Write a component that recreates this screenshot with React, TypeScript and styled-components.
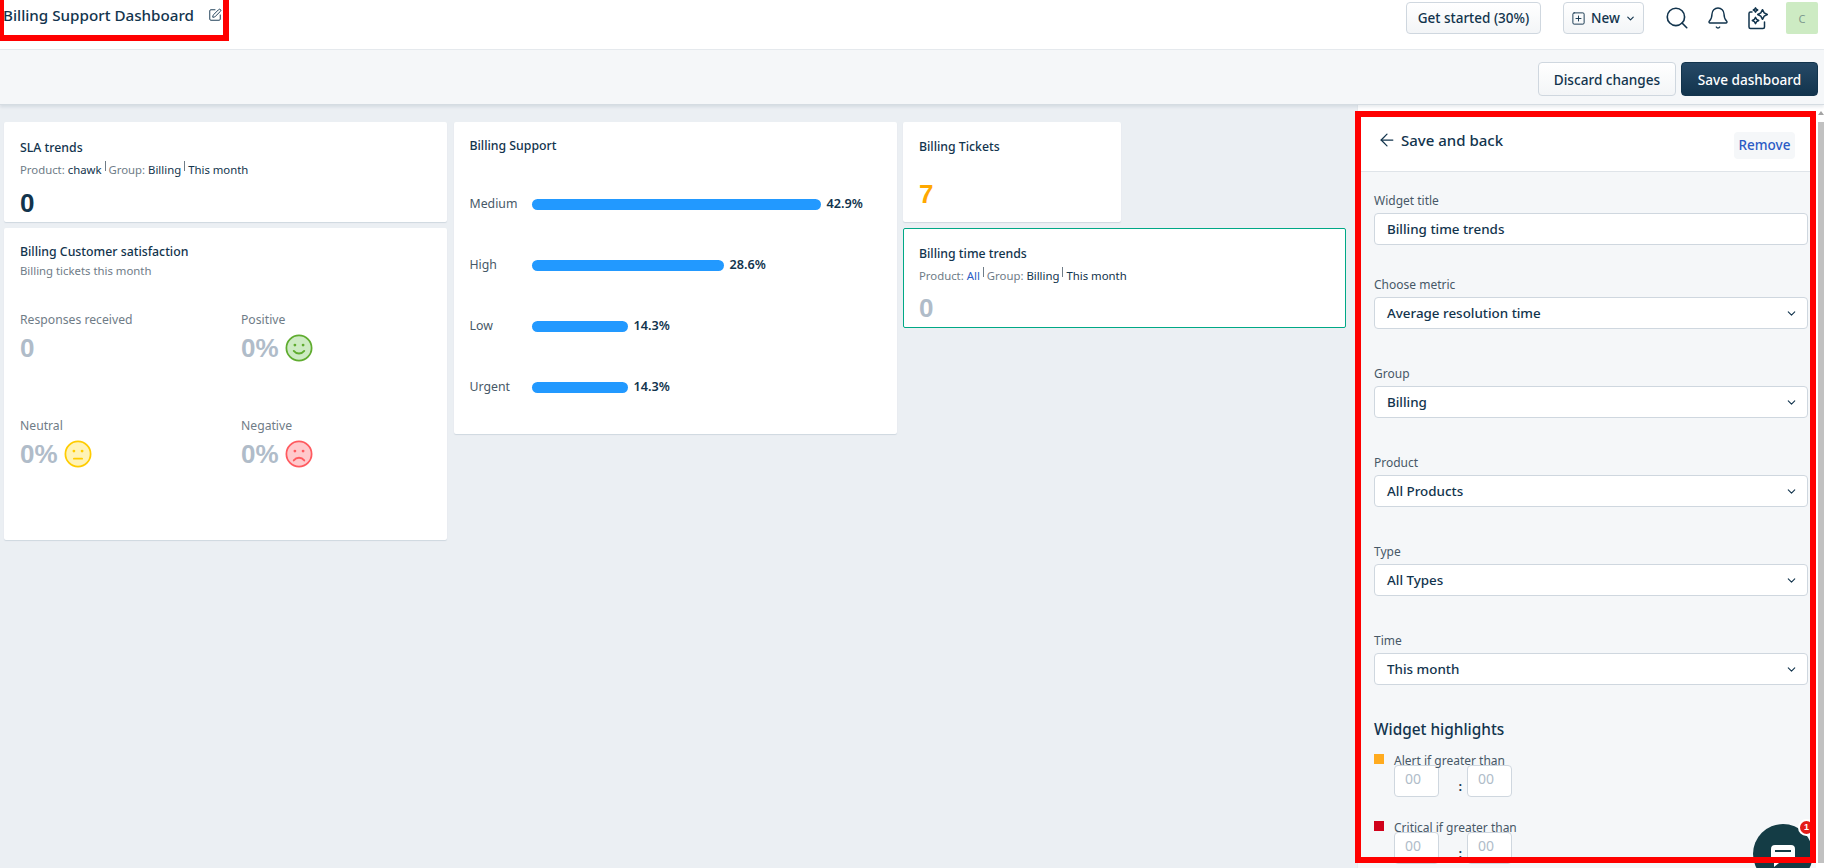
import React from "react";
import styled, { createGlobalStyle } from "styled-components";
import { ArrowLeft, ChevronDown, Search, Bell, SquarePlus, SquarePen } from "lucide-react";

const Global = createGlobalStyle`
  html, body { margin: 0; padding: 0; height: 100%; overflow: hidden; }
  body { font-family: "Noto Sans", "Open Sans", sans-serif; color: #12344d; background: #ebeff3; }
  * { box-sizing: border-box; }
`;

const Page = styled.div`
  position: relative;
  width: 1824px;
  height: 868px;
  display: flex;
  flex-direction: column;
  overflow: hidden;
  background: #ebeff3;
`;

const Header = styled.header`
  height: 50px;
  flex: none;
  background: #fff;
  border-bottom: 1px solid #e6eaee;
  display: flex;
  align-items: flex-start;
  padding: 2px 6px 0 3px;
`;

const TitleBlock = styled.div`
  display: flex;
  align-items: center;
  gap: 14px;
  height: 26px;
  flex: 1;
`;

const PageTitle = styled.h1`
  margin: 0;
  font-size: 15.2px;
  font-weight: 500;
  color: #12344d;
  white-space: nowrap;
`;

const HeaderButton = styled.button<{ $w: number; $ml: number }>`
  width: ${(p) => p.$w}px;
  height: 32px;
  margin-left: ${(p) => p.$ml}px;
  border: 1px solid #cfd7df;
  border-radius: 4px;
  background: linear-gradient(#fff, #f3f5f7);
  font: 500 13.5px "Noto Sans", sans-serif;
  color: #12344d;
  display: inline-flex;
  align-items: center;
  justify-content: center;
  gap: 5px;
  padding: 0;
`;

const IconSlot = styled.div<{ $ml: number; $w: number }>`
  margin-left: ${(p) => p.$ml}px;
  width: ${(p) => p.$w}px;
  height: 32px;
  display: flex;
  align-items: center;
  justify-content: center;
  color: #12344d;
`;

const Avatar = styled.div`
  margin-left: 16px;
  width: 32px;
  height: 32px;
  border-radius: 2px;
  background: #cdebc3;
  color: #7f9a8f;
  font-size: 11px;
  display: flex;
  align-items: center;
  justify-content: center;
`;

const Toolbar = styled.div`
  height: 55px;
  flex: none;
  background: #f5f7f9;
  border-bottom: 1px solid #d5dce2;
  box-shadow: 0 2px 3px rgba(18, 52, 77, 0.1);
  display: flex;
  justify-content: flex-end;
  align-items: flex-start;
  gap: 5px;
  padding: 12px 6px 0 0;
  position: relative;
  z-index: 1;
`;

const ToolButton = styled.button<{ $primary?: boolean }>`
  width: ${(p) => (p.$primary ? 137 : 138)}px;
  height: 34px;
  border-radius: 4px;
  border: 1px solid ${(p) => (p.$primary ? "#12344d" : "#cfd7df")};
  background: ${(p) => (p.$primary ? "linear-gradient(#264966, #12344d)" : "linear-gradient(#fff, #f3f5f7)")};
  color: ${(p) => (p.$primary ? "#fff" : "#12344d")};
  font: 500 13.6px "Noto Sans", sans-serif;
  padding: 1px 0 0;
`;

const Body = styled.div`
  flex: 1;
  display: flex;
  min-height: 0;
`;

const Canvas = styled.main`
  flex: 1;
  display: flex;
  gap: 6.5px;
  padding: 17px 0 0 4px;
  align-items: flex-start;
`;

const Column = styled.div`
  width: 443px;
  display: flex;
  flex-direction: column;
  gap: 6px;
`;

const Card = styled.section<{ $h: number; $w?: number; $active?: boolean; $pt?: number }>`
  height: ${(p) => p.$h}px;
  width: ${(p) => (p.$w ? `${p.$w}px` : "auto")};
  background: #fff;
  border-radius: 2px;
  box-shadow: ${(p) => (p.$active ? "none" : "0 1px 1px #cfd7df")};
  border: ${(p) => (p.$active ? "1px solid #00a886" : "none")};
  padding: ${(p) => (p.$active ? "16px 15px" : `${p.$pt ?? 17}px 16px`)};
`;

const CardTitle = styled.div`
  font-size: 12.3px;
  font-weight: 500;
  line-height: 17px;
  color: #12344d;
`;

const CardSub = styled.div<{ $mt?: number }>`
  font-size: 11.35px;
  line-height: 16px;
  margin-top: ${(p) => p.$mt ?? 5}px;
  color: #6f7c87;
  white-space: nowrap;
`;

const SubValue = styled.span<{ $color?: string }>`
  color: ${(p) => p.$color || "#12344d"};
`;

const Sep = styled.span`
  display: inline-block;
  width: 1px;
  height: 10px;
  margin: 0 3px 0 3px;
  background: #6f7c87;
  vertical-align: 3px;
`;

const BigValue = styled.div<{ $color: string; $mt: number }>`
  font: 700 26px/30px "Liberation Sans", Arial, sans-serif;
  color: ${(p) => p.$color};
  margin-top: ${(p) => p.$mt}px;
`;

const CsatGrid = styled.div`
  display: grid;
  grid-template-columns: 221px 1fr;
  grid-auto-rows: 105.5px;
  margin-top: 32px;
`;

const Metric = styled.div``;

const MetricLabel = styled.div`
  font-size: 12.2px;
  line-height: 17px;
  color: #6f7c87;
`;

const MetricValue = styled.div`
  display: flex;
  align-items: center;
  gap: 6.5px;
  font: 700 26px/30px "Liberation Sans", Arial, sans-serif;
  color: #b0bcc9;
  margin-top: 5px;
`;

const BarList = styled.div`
  margin-top: 39px;
  display: flex;
  flex-direction: column;
  gap: 41px;
`;

const BarRow = styled.div`
  display: flex;
  align-items: center;
  height: 20px;
`;

const BarLabel = styled.div`
  width: 62px;
  flex: none;
  font-size: 12.3px;
  color: #475867;
`;

const Bar = styled.div`
  height: 11px;
  border-radius: 6px;
  background: #2299ff;
  margin-top: 2px;
`;

const BarValue = styled.div`
  font-size: 12.7px;
  font-weight: 600;
  color: #12344d;
  margin-left: 6px;
`;

const Panel = styled.aside`
  width: 459px;
  flex: none;
  background: #f5f7f9;
  border-left: 1px solid #e6eaee;
  overflow: hidden;
`;

const PanelHead = styled.div`
  height: 67px;
  background: #fff;
  border-bottom: 1px solid #dfe4e9;
  display: flex;
  align-items: flex-start;
  justify-content: space-between;
  padding: 25px 21px 0 19px;
`;

const BackLink = styled.div`
  display: flex;
  align-items: center;
  gap: 4px;
  font-size: 15px;
  font-weight: 500;
  line-height: 20px;
  color: #12344d;
`;

const RemoveButton = styled.div`
  width: 61px;
  height: 27px;
  margin-top: 2px;
  padding-bottom: 2px;
  border-radius: 4px;
  background: #f5f7f9;
  color: #2c5cc5;
  font-size: 13.5px;
  font-weight: 500;
  display: flex;
  align-items: center;
  justify-content: center;
`;

const PanelBody = styled.div`
  padding: 21px 8px 0 16px;
`;

const Field = styled.div<{ $mb: number }>`
  margin-bottom: ${(p) => p.$mb}px;
`;

const FieldLabel = styled.div`
  font-size: 12px;
  line-height: 16px;
  color: #475867;
  margin-bottom: 4px;
`;

const Control = styled.div`
  height: 32px;
  border: 1px solid #cfd7df;
  border-radius: 4px;
  background: #fff;
  font-size: 13.4px;
  font-weight: 500;
  color: #12344d;
  display: flex;
  align-items: center;
  justify-content: space-between;
  padding: 0 9px 0 12px;
`;

const SectionTitle = styled.div`
  font-size: 15.4px;
  font-weight: 500;
  line-height: 20px;
  color: #12344d;
  margin-top: -1px;
`;

const Highlight = styled.div`
  display: flex;
  gap: 10px;
  height: 63px;
  margin-top: 4px;
`;

const Swatch = styled.div<{ $color: string }>`
  width: 10px;
  height: 10px;
  margin-top: 10px;
  background: ${(p) => p.$color};
`;

const HighlightLabel = styled.div`
  font-size: 12px;
  line-height: 14px;
  color: #475867;
  margin-top: 10px;
  position: relative;
  z-index: 1;
  white-space: nowrap;
`;

const TimeRow = styled.div`
  display: flex;
  align-items: flex-end;
  margin-top: -3px;
`;

const TimeInput = styled.div`
  width: 45px;
  height: 32px;
  border: 1px solid #cfd7df;
  border-radius: 4px;
  background: #fff;
  color: #b0bcc9;
  font-size: 14px;
  display: flex;
  justify-content: center;
  padding: 3px 7px 0 0;
`;

const Colon = styled.div`
  width: 28px;
  text-align: right;
  padding: 0 5px 2px 0;
  font-size: 13px;
  font-weight: 600;
  color: #12344d;
  line-height: 18px;
`;

const Scrollbar = styled.div`
  width: 8px;
  flex: none;
  background: #fff;
  padding: 6px 0 0 2px;
`;

const ScrollArrow = styled.div`
  width: 0;
  height: 0;
  margin: 0 0 7px 0;
  border-left: 3px solid transparent;
  border-right: 3px solid transparent;
  border-bottom: 4px solid #a3a3a3;
`;

const Thumb = styled.div`
  height: 741px;
  background: #c1c1c1;
`;

const Annotation = styled.div<{ $l: number; $t: number; $w: number; $h: number }>`
  position: absolute;
  left: ${(p) => p.$l}px;
  top: ${(p) => p.$t}px;
  width: ${(p) => p.$w}px;
  height: ${(p) => p.$h}px;
  border: 6px solid #ff0000;
  pointer-events: none;
  z-index: 5;
`;

const ChatBubble = styled.div`
  position: absolute;
  left: 1753px;
  top: 824px;
  width: 60px;
  height: 60px;
  border-radius: 50%;
  background: #143c45;
  z-index: 3;
  display: flex;
  justify-content: center;
  padding-top: 21px;
`;

const ChatBadge = styled.div`
  position: absolute;
  left: 1798px;
  top: 819px;
  width: 17px;
  height: 17px;
  border-radius: 50%;
  background: #e41b17;
  border: 2px solid #fff;
  color: #fff;
  font: 700 9px/13px "Liberation Sans", sans-serif;
  text-align: center;
  z-index: 4;
`;

function Face({ stroke, fill, mood }: { stroke: string; fill: string; mood: "pos" | "neu" | "neg" }) {
  const mouth = mood === "pos" ? "M7.5 14.5c2.4 3 6.6 3 9 0" : mood === "neu" ? "M8.5 16h7" : "M7.5 17.5c2.4-3 6.6-3 9 0";
  return (
    <svg width="28" height="28" viewBox="0 0 24 24" fill="none">
      <circle cx="12" cy="12" r="10.8" fill={fill} stroke={stroke} strokeWidth="1.5" />
      <circle cx="8.5" cy="9.5" r="1.2" fill={stroke} />
      <circle cx="15.5" cy="9.5" r="1.2" fill={stroke} />
      <path d={mouth} stroke={stroke} strokeWidth="1.6" strokeLinecap="round" />
    </svg>
  );
}

function AiIcon() {
  const star = (cx: number, cy: number, r: number) =>
    `M${cx} ${cy - r}L${cx + r * 0.35} ${cy - r * 0.35}L${cx + r} ${cy}L${cx + r * 0.35} ${cy + r * 0.35}L${cx} ${cy + r}L${cx - r * 0.35} ${cy + r * 0.35}L${cx - r} ${cy}L${cx - r * 0.35} ${cy - r * 0.35}Z`;
  return (
    <svg width="24" height="24" viewBox="0 0 24 24" fill="none" stroke="#12344d" strokeWidth="1.5" strokeLinejoin="round" strokeLinecap="round">
      <path d="M6 6H4.5A1.5 1.5 0 0 0 3 7.500V21a1.500 1.500 0 0 0 1.500 1.500H17A1.500 1.500 0 0 0 18.500 21v-5" />
      <path d={star(16.5, 8.5, 4.8)} />
      <path d={star(9.5, 14.5, 3.2)} />
      <path d={star(9.5, 4, 2.2)} />
    </svg>
  );
}

const fields = [
  { label: "Choose metric", value: "Average resolution time", mb: 37 },
  { label: "Group", value: "Billing", mb: 37 },
  { label: "Product", value: "All Products", mb: 37 },
  { label: "Type", value: "All Types", mb: 37 },
  { label: "Time", value: "This month", mb: 36 },
];

const bars = [
  { label: "Medium", w: 289, v: "42.9%" },
  { label: "High", w: 192, v: "28.6%" },
  { label: "Low", w: 96, v: "14.3%" },
  { label: "Urgent", w: 96, v: "14.3%" },
];

export default function App() {
  return (
    <Page>
      <Global />
      <Header>
        <TitleBlock>
          <PageTitle>Billing Support Dashboard</PageTitle>
          <SquarePen size={14} strokeWidth={1.6} color="#12344d" />
        </TitleBlock>
        <HeaderButton $w={135} $ml={0}>Get started (30%)</HeaderButton>
        <HeaderButton $w={81} $ml={22}>
          <SquarePlus size={15} strokeWidth={1.5} />
          New
          <ChevronDown size={11} strokeWidth={2.5} />
        </HeaderButton>
        <IconSlot $ml={20} $w={26}><Search size={28} strokeWidth={1.5} /></IconSlot>
        <IconSlot $ml={16} $w={24}><Bell size={26} strokeWidth={1.4} /></IconSlot>
        <IconSlot $ml={16} $w={24}><AiIcon /></IconSlot>
        <Avatar>C</Avatar>
      </Header>
      <Toolbar>
        <ToolButton>Discard changes</ToolButton>
        <ToolButton $primary>Save dashboard</ToolButton>
      </Toolbar>
      <Body>
        <Canvas>
          <Column>
            <Card $h={100}>
              <CardTitle>SLA trends</CardTitle>
              <CardSub>
                Product: <SubValue>chawk</SubValue><Sep />Group: <SubValue>Billing</SubValue><Sep /><SubValue>This month</SubValue>
              </CardSub>
              <BigValue $color="#12344d" $mt={10}>0</BigValue>
            </Card>
            <Card $h={312} $pt={15}>
              <CardTitle>Billing Customer satisfaction</CardTitle>
              <CardSub $mt={3}>Billing tickets this month</CardSub>
              <CsatGrid>
                <Metric>
                  <MetricLabel>Responses received</MetricLabel>
                  <MetricValue>0</MetricValue>
                </Metric>
                <Metric>
                  <MetricLabel>Positive</MetricLabel>
                  <MetricValue>0%<Face mood="pos" stroke="#5fac2f" fill="#cdebc3" /></MetricValue>
                </Metric>
                <Metric>
                  <MetricLabel>Neutral</MetricLabel>
                  <MetricValue>0%<Face mood="neu" stroke="#ffcc00" fill="#fff3b8" /></MetricValue>
                </Metric>
                <Metric>
                  <MetricLabel>Negative</MetricLabel>
                  <MetricValue>0%<Face mood="neg" stroke="#ff5a5f" fill="#ffc9cc" /></MetricValue>
                </Metric>
              </CsatGrid>
            </Card>
          </Column>
          <Column>
            <Card $h={312} $pt={15}>
              <CardTitle>Billing Support</CardTitle>
              <BarList>
                {bars.map((b) => (
                  <BarRow key={b.label}>
                    <BarLabel>{b.label}</BarLabel>
                    <Bar style={{ width: b.w }} />
                    <BarValue>{b.v}</BarValue>
                  </BarRow>
                ))}
              </BarList>
            </Card>
          </Column>
          <Column>
            <Card $h={100} $w={218} $pt={16}>
              <CardTitle>Billing Tickets</CardTitle>
              <BigValue $color="#ffa800" $mt={24}>7</BigValue>
            </Card>
            <Card $h={100} $active>
              <CardTitle>Billing time trends</CardTitle>
              <CardSub>
                Product: <SubValue $color="#2c5cc5">All</SubValue><Sep />Group: <SubValue>Billing</SubValue><Sep /><SubValue>This month</SubValue>
              </CardSub>
              <BigValue $color="#b0bcc9" $mt={9}>0</BigValue>
            </Card>
          </Column>
        </Canvas>
        <Panel>
          <PanelHead>
            <BackLink>
              <ArrowLeft size={20} strokeWidth={1.5} />
              Save and back
            </BackLink>
            <RemoveButton>Remove</RemoveButton>
          </PanelHead>
          <PanelBody>
            <Field $mb={32}>
              <FieldLabel>Widget title</FieldLabel>
              <Control>Billing time trends</Control>
            </Field>
            {fields.map((f) => (
              <Field key={f.label} $mb={f.mb}>
                <FieldLabel>{f.label}</FieldLabel>
                <Control>
                  {f.value}
                  <ChevronDown size={13} strokeWidth={2} />
                </Control>
              </Field>
            ))}
            <SectionTitle>Widget highlights</SectionTitle>
            <Highlight>
              <Swatch $color="#ffab1f" />
              <div>
                <HighlightLabel>Alert if greater than</HighlightLabel>
                <TimeRow>
                  <TimeInput>00</TimeInput><Colon>:</Colon><TimeInput>00</TimeInput>
                </TimeRow>
              </div>
            </Highlight>
            <Highlight>
              <Swatch $color="#d0021b" />
              <div>
                <HighlightLabel>Critical if greater than</HighlightLabel>
                <TimeRow>
                  <TimeInput>00</TimeInput><Colon>:</Colon><TimeInput>00</TimeInput>
                </TimeRow>
              </div>
            </Highlight>
          </PanelBody>
        </Panel>
        <Scrollbar><ScrollArrow /><Thumb /></Scrollbar>
      </Body>
      <ChatBubble>
        <svg width="24" height="22" viewBox="0 0 24 22">
          <path d="M4 0h16a4 4 0 0 1 4 4v10a4 4 0 0 1-4 4H8l-5 4v-4.200A4 4 0 0 1 0 14V4a4 4 0 0 1 4-4z" fill="#fff" />
          <rect x="4" y="5" width="16" height="2" fill="#143c45" />
        </svg>
      </ChatBubble>
      <ChatBadge>1</ChatBadge>
      <Annotation $l={-2} $t={-6} $w={231} $h={47} />
      <Annotation $l={1355} $t={111} $w={461} $h={752} />
    </Page>
  );
}
